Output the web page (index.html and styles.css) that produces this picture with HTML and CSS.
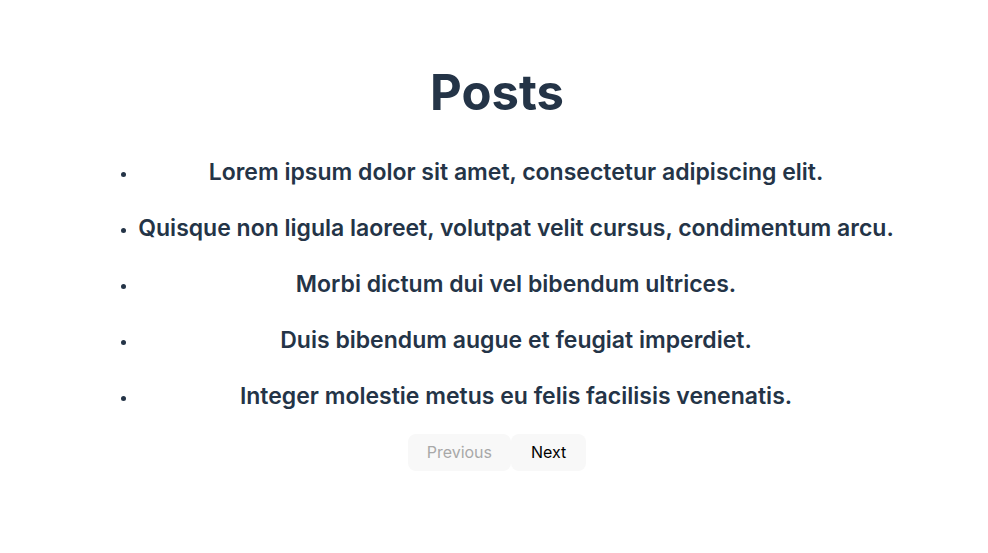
FILE: index.html
```html
<!DOCTYPE html>
<html>
<head>
<meta charset="utf-8">
<link rel="stylesheet" href="styles.css">
</head>
<body>
<div class="page">
  <h1 class="title">Posts</h1>
  <ul class="posts">
    <li class="post"><div class="post-title">Lorem ipsum dolor sit amet, consectetur adipiscing elit.</div></li>
    <li class="post"><div class="post-title">Quisque non ligula laoreet, volutpat velit cursus, condimentum arcu.</div></li>
    <li class="post"><div class="post-title">Morbi dictum dui vel bibendum ultrices.</div></li>
    <li class="post"><div class="post-title">Duis bibendum augue et feugiat imperdiet.</div></li>
    <li class="post"><div class="post-title">Integer molestie metus eu felis facilisis venenatis.</div></li>
  </ul>
  <div class="pager">
    <button class="btn btn-disabled">Previous</button>
    <button class="btn btn-next">Next</button>
  </div>
</div>
</body>
</html>
```

FILE: styles.css
```css
html, body {
  margin: 0;
  padding: 0;
  background: #ffffff;
}
body {
  font-family: Inter, "Noto Sans", sans-serif;
  color: #243447;
}
.page {
  display: flex;
  flex-direction: column;
  align-items: center;
  padding-top: 64px;
  padding-left: 6px;
}
.title {
  margin: 0;
  font-size: 49px;
  font-weight: 700;
  line-height: 58px;
}
.posts {
  margin: 36px 0 0 0;
  padding-left: 38px;
  text-align: center;
}
.post {
  font-size: 15px;
  margin-bottom: 28px;
}
.post:last-child {
  margin-bottom: 0;
}
.post-title {
  font-size: 23px;
  font-weight: 600;
  line-height: 28px;
}
.pager {
  display: flex;
  margin-top: 24px;
}
.btn {
  font-family: Inter, "Noto Sans", sans-serif;
  font-size: 16px;
  line-height: 19px;
  height: 37px;
  padding: 0 19px;
  border: none;
  border-radius: 8px;
  background: #f8f8f8;
  color: #000;
}
.btn-next {
  padding: 0 20px;
}
.btn-disabled {
  color: #a8a8a8;
}
```
